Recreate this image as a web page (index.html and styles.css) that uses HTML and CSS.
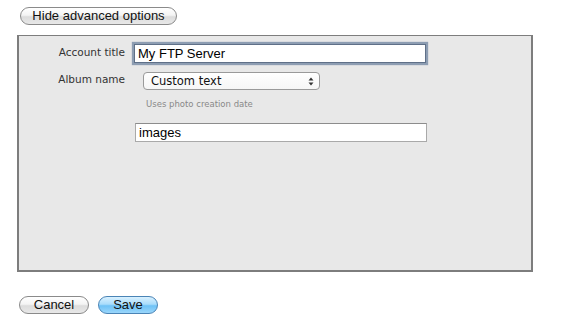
FILE: index.html
```html
<!DOCTYPE html>
<html lang="en">
<head>
    <meta charset="UTF-8">
    <title>FTP Account</title>
    <link rel="stylesheet" href="styles.css">
</head>
<body>
    <div class="top-bar">
        <button class="pill">Hide advanced options</button>
    </div>

    <div class="panel">
        <div class="form">
            <label class="form-label" for="accountTitle">Account title</label>
            <div class="form-field">
                <input type="text" id="accountTitle" class="text-input focused" value="My FTP Server">
            </div>

            <label class="form-label" for="albumName">Album name</label>
            <div class="form-field">
                <div class="select-box" id="albumName">
                    <span>Custom text</span>
                    <svg width="6" height="9" viewBox="0 0 6 9">
                        <path d="M3 0.5 L5.5 3.5 H0.5 Z" fill="#333"></path>
                        <path d="M3 8.5 L5.5 5.5 H0.5 Z" fill="#333"></path>
                    </svg>
                </div>
            </div>

            <div></div>
            <div class="hint">Uses photo creation date</div>

            <div></div>
            <div class="form-field">
                <input type="text" class="text-input" value="images">
            </div>
        </div>
    </div>

    <div class="actions">
        <button class="pill cancel">Cancel</button>
        <button class="pill primary">Save</button>
    </div>
</body>
</html>
```

FILE: styles.css
```css
* {
    margin: 0;
    padding: 0;
    box-sizing: border-box;
}

body {
    background: #fff;
    font-family: "DejaVu Sans", sans-serif;
    color: #222;
    width: 564px;
    height: 325px;
}

.top-bar {
    padding: 5px 0 0 20px;
    height: 35px;
}

.pill {
    height: 18px;
    padding: 0 8px;
    border: 1px solid #8a8a8a;
    border-radius: 9px;
    background: linear-gradient(#ffffff, #f4f4f4 45%, #dcdcdc 55%, #e8e8e8);
    font-family: "Liberation Sans", Arial, sans-serif;
    font-size: 13px;
    color: #111;
    line-height: 16px;
    white-space: nowrap;
    cursor: pointer;
}

.top-bar .pill {
    width: 157px;
}

.panel {
    margin-left: 17px;
    width: 516px;
    height: 237px;
    border: 2px solid #7d7d7d;
    border-top-width: 1px;
    background: #e8e8e8;
    padding-top: 7px;
}

.form {
    display: grid;
    grid-template-columns: 106px 1fr;
    column-gap: 9px;
    align-items: center;
}

.form-label {
    text-align: right;
    font-size: 10.5px;
    color: #333;
    align-self: start;
}

.form-label:nth-of-type(1) {
    padding-top: 3px;
}

.form-label:nth-of-type(2) {
    padding-top: 10px;
}

.text-input {
    width: 292px;
    height: 19px;
    border: 1px solid #a9a9a9;
    border-top-color: #8c8c8c;
    background: #fff;
    font-family: "Liberation Sans", Arial, sans-serif;
    font-size: 13px;
    padding: 0 3px;
    color: #000;
    outline: none;
}

.text-input.focused {
    border-color: #5f7088;
    box-shadow: 0 0 1px 2px #8d9db2;
}

.select-box {
    margin: 9px 0 0 9px;
    width: 177px;
    height: 18px;
    border: 1px solid #9a9a9a;
    border-radius: 4px;
    background: linear-gradient(#ffffff, #f6f6f6);
    display: flex;
    align-items: center;
    justify-content: space-between;
    padding: 0 5px 0 7px;
    font-size: 11.5px;
    color: #111;
}

.hint {
    margin: 9px 0 0 12px;
    font-size: 8.5px;
    color: #888;
    height: 16px;
}

.form-field:last-child {
    margin-top: 7px;
}

.form-field:last-child .text-input {
    width: 292px;
    margin-left: 1px;
}

.actions {
    display: flex;
    gap: 9px;
    padding: 24px 0 0 19px;
}

.actions .cancel {
    width: 70px;
}

.actions .primary {
    width: 60px;
    border-color: #4a84b6;
    background: linear-gradient(#d9f1ff, #a9dcfb 45%, #6ec2f6 55%, #9ad6fb);
}
```
